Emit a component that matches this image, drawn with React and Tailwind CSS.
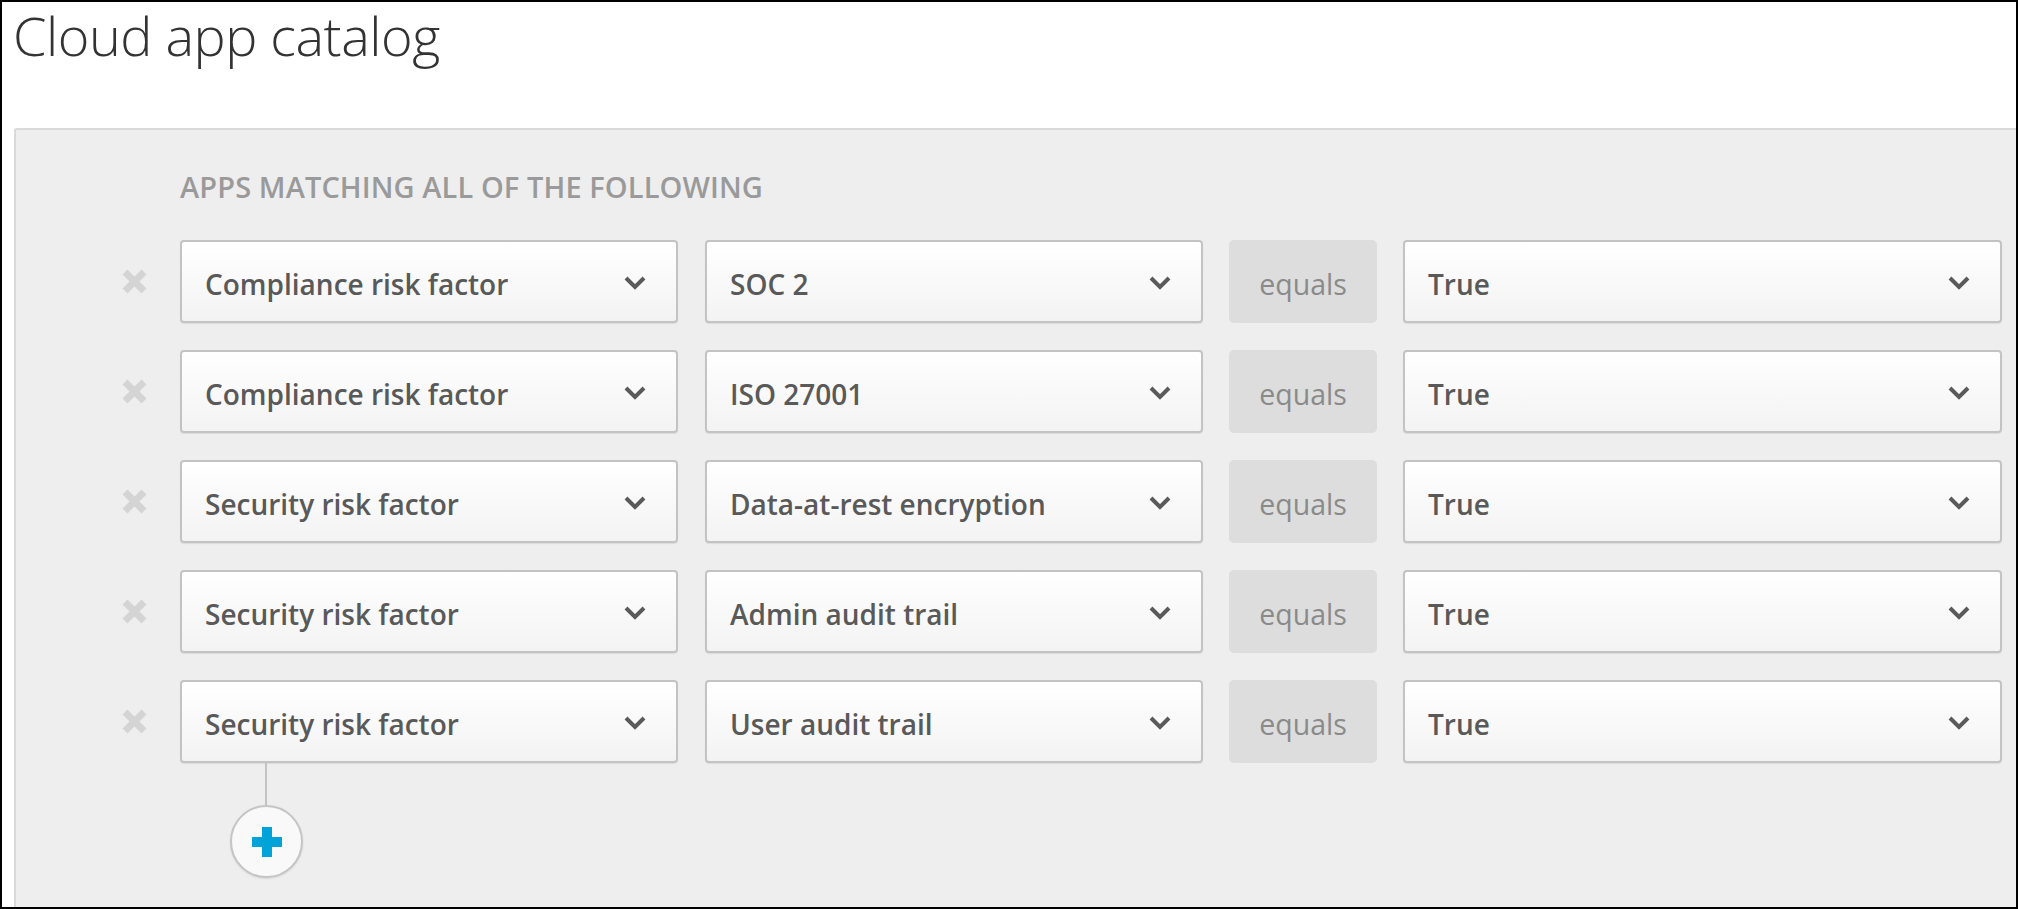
const rows = [
  { factor: 'Compliance risk factor', item: 'SOC 2' },
  { factor: 'Compliance risk factor', item: 'ISO 27001' },
  { factor: 'Security risk factor', item: 'Data-at-rest encryption' },
  { factor: 'Security risk factor', item: 'Admin audit trail' },
  { factor: 'Security risk factor', item: 'User audit trail' },
];

const Chevron = () => (
  <svg width="22" height="14" viewBox="0 0 22 14" className="shrink-0 mt-[3px]">
    <polyline points="2,2 11,11 20,2" fill="none" stroke="#5a5a5a" strokeWidth="4" />
  </svg>
);

const RemoveIcon = () => (
  <svg width="27" height="27" viewBox="0 0 27 27">
    <path d="M4 4 L23 23 M23 4 L4 23" stroke="#d4d4d4" strokeWidth="7" strokeLinecap="butt" />
  </svg>
);

const Select = ({ label, width }) => (
  <div
    className={`${width} h-[83px] flex items-center justify-between pl-[23px] pr-[30px] border-2 border-[#c3c3c3] rounded-[4px] bg-gradient-to-b from-white to-[#f3f3f3] shadow-[0_1px_1px_rgba(0,0,0,0.08)]`}
  >
    <span className="text-[28px] font-semibold text-[#595959] mt-[5px]">{label}</span>
    <Chevron />
  </div>
);

const FilterRow = ({ factor, item }) => (
  <div className="flex items-center h-[83px]">
    <div className="ml-[105px] mr-[32px] w-[27px] h-[27px] flex items-center justify-center">
      <RemoveIcon />
    </div>
    <Select label={factor} width="w-[498px]" />
    <div className="ml-[27px]">
      <Select label={item} width="w-[498px]" />
    </div>
    <div className="ml-[26px] w-[148px] h-[83px] rounded-[5px] bg-[#dddddd] flex items-center justify-center">
      <span className="text-[28.5px] text-[#8a8a8a] mt-[5px]">equals</span>
    </div>
    <div className="ml-[26px]">
      <Select label="True" width="w-[599px]" />
    </div>
  </div>
);

export default function App() {
  return (
    <div
      className="w-[2018px] h-[909px] border-2 border-black bg-white flex flex-col overflow-hidden"
      style={{ fontFamily: '"Open Sans", "Noto Sans", sans-serif' }}
    >
      <div className="h-[126px] pl-[11px]">
        <h1 className="text-[54px] font-light text-[#333333] leading-[64px] pt-[1px] tracking-[-0.5px]">
          Cloud app catalog
        </h1>
      </div>
      <div className="flex-1 ml-[12px] border-t-2 border-l-2 border-[#d9d9d9] rounded-tl-[3px] bg-[#eeeeee]">
        <div className="pl-[164px] pt-[35px] h-[110px]">
          <h2 className="text-[29px] font-semibold text-[#9a9a9a] uppercase tracking-[0.1px]">
            Apps matching all of the following
          </h2>
        </div>
        <div className="flex flex-col gap-[27px]">
          {rows.map((r, i) => (
            <FilterRow key={i} factor={r.factor} item={r.item} />
          ))}
        </div>
        <div className="flex flex-col items-start pl-[214px]">
          <div className="ml-[35px] w-[2px] h-[42px] bg-[#c3c3c3]" />
          <button className="w-[73px] h-[73px] rounded-full border-2 border-[#c5c5c5] bg-[#f9f9f9] shadow-[0_1px_2px_rgba(0,0,0,0.1)] flex items-center justify-center">
            <svg width="30" height="30" viewBox="0 0 30 30">
              <path d="M10 0 H20 V10 H30 V20 H20 V30 H10 V20 H0 V10 H10 Z" fill="#00a3d7" />
            </svg>
          </button>
        </div>
      </div>
    </div>
  );
}
